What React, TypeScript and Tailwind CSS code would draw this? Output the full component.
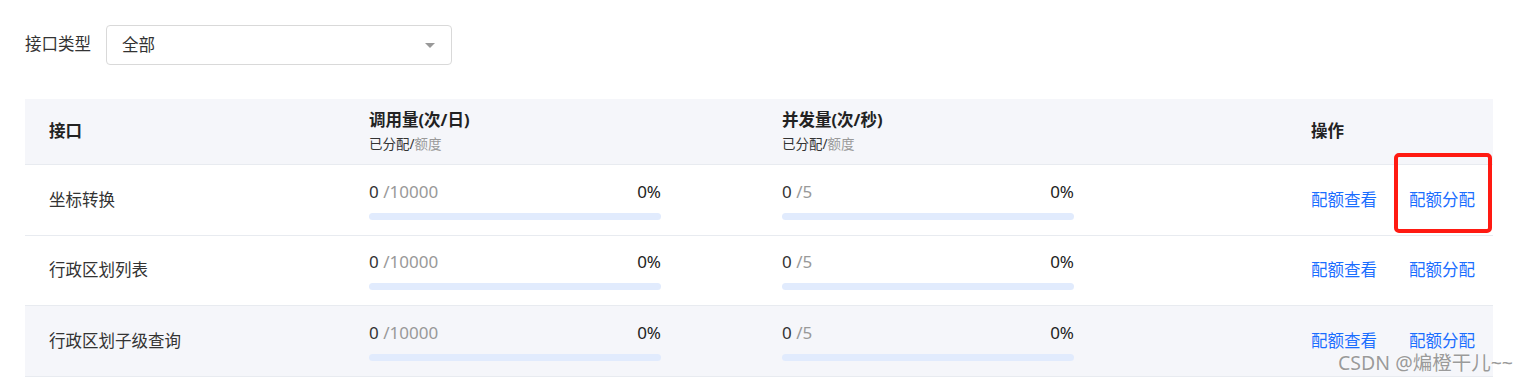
const rows = [
  { name: "坐标转换", used: 0, quota: 10000, cUsed: 0, cQuota: 5 },
  { name: "行政区划列表", used: 0, quota: 10000, cUsed: 0, cQuota: 5 },
  { name: "行政区划子级查询", used: 0, quota: 10000, cUsed: 0, cQuota: 5 },
];

function Usage({ used, quota }: { used: number; quota: number }) {
  return (
    <div className="w-[292px]">
      <div className="flex items-center justify-between h-[22px] text-[17px]">
        <span>
          <span className="text-[#333]">{used}</span>
          <span className="text-[#999]"> /{quota}</span>
        </span>
        <span className="text-[#222]">{Math.round((used / quota) * 100)}%</span>
      </div>
      <div className="mt-[10px] h-[7px] rounded-full bg-[#e1ebfd]" />
    </div>
  );
}

function HeadCol({ title }: { title: string }) {
  return (
    <div className="flex flex-col">
      <span className="text-[16.5px] font-bold leading-[22px] text-[#222]">{title}</span>
      <span className="mt-[4px] text-[13.5px] leading-[18px]">
        <span className="text-[#333]">已分配/</span>
        <span className="text-[#999]">额度</span>
      </span>
    </div>
  );
}

export default function App() {
  return (
    <main
      className="relative w-[1528px] h-[381px] bg-white pl-[25px] pt-[25px] text-[#333] overflow-hidden"
      style={{ fontFamily: '"Noto Sans", "Noto Sans CJK SC", sans-serif' }}
    >
      {/* Filter */}
      <div className="flex items-center">
        <span className="w-[81px] text-[16.5px] text-[#333] -mt-[2px]">接口类型</span>
        <div className="flex items-center justify-between w-[346px] h-[40px] rounded-[4px] border border-[#d9d9d9] pl-[15px] pr-[16px]">
          <span className="text-[16.5px] text-[#333]">全部</span>
          <span className="w-0 h-0 border-l-[5px] border-r-[5px] border-t-[5px] border-l-transparent border-r-transparent border-t-[#999]" />
        </div>
      </div>

      {/* Table */}
      <div className="mt-[34px] w-[1468px]">
        <div className="grid grid-cols-[320px_413px_529px_206px] h-[66px] items-center bg-[#f5f6fa] border-b border-[#e8ebf0]">
          <div className="pl-[24px] text-[16.5px] font-bold text-[#222]">接口</div>
          <div className="pl-[24px] -mt-[2px]"><HeadCol title="调用量(次/日)" /></div>
          <div className="pl-[24px] -mt-[2px]"><HeadCol title="并发量(次/秒)" /></div>
          <div className="pl-[24px] text-[16.5px] font-bold text-[#222]">操作</div>
        </div>
        {rows.map((r, i) => (
          <div
            key={r.name}
            className={`grid grid-cols-[320px_413px_529px_206px] items-center border-b border-[#e8ebf0] ${
              i === 1 ? "h-[70px]" : "h-[71px]"
            } ${i === 2 ? "bg-[#f5f6fa]" : "bg-white"}`}
          >
            <div className="pl-[24px] text-[16.5px] text-[#333]">{r.name}</div>
            <div className="pl-[24px]"><Usage used={r.used} quota={r.quota} /></div>
            <div className="pl-[24px]"><Usage used={r.cUsed} quota={r.cQuota} /></div>
            <div className="pl-[24px] flex items-center gap-[32px] text-[16.5px] text-[#1a6dff]">
              <span>配额查看</span>
              <span className="relative">
                配额分配
                {i === 0 && (
                  <span className="absolute -left-[15px] -right-[17px] -top-[35px] -bottom-[21px] rounded-[5px] border-[4px] border-[#ff1a12]" />
                )}
              </span>
            </div>
          </div>
        ))}
      </div>

      <span className="absolute left-[1338px] top-[348px] text-[19.5px] text-[#9a9a9a] [text-shadow:0_0_2px_#fff]">
        CSDN @煸橙干儿~~
      </span>
    </main>
  );
}
